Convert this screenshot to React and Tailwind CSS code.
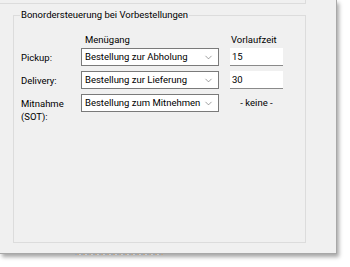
import { ChevronDown } from 'lucide-react';

const rows = [
    { label: ['Pickup:'], value: 'Bestellung zur Abholung', time: '15' },
    { label: ['Delivery:'], value: 'Bestellung zur Lieferung', time: '30' },
    { label: ['Mitnahme', '(SOT):'], value: 'Bestellung zum Mitnehmen', time: null },
];

const Combo = ({ value }) => (
    <div className="flex items-center justify-between h-[18px] w-[138px] bg-white border border-[#7a7a7a] pl-[3px] pr-[4px]">
        <span className="whitespace-nowrap leading-none">{value}</span>
        <ChevronDown className="text-[#606060] shrink-0" size={11} strokeWidth={1.3} />
    </div>
);

const App = () => {
    return (
        <div className="min-h-screen bg-white text-black text-[9.5px]" style={{ fontFamily: 'Roboto, "Noto Sans", sans-serif' }}>
            <div className="w-[337px] h-[254px] bg-[#f0f0f0] border-r border-b border-[#a8a8a8] shadow-[2px_3px_4px_rgba(0,0,0,0.35)]">
                {/* end of the box above */}
                <div className="h-[4px] w-[306px] border-b border-r border-[#dcdcdc]" />

                <div className="relative ml-[13px] mt-[11px] w-[293px] h-[228px] border border-[#dcdcdc]">
                    <span className="absolute left-[6px] -top-[8px] px-[1px] bg-[#f0f0f0] leading-[14px]">
                        Bonordersteuerung bei Vorbestellungen
                    </span>

                    <div className="pl-[7px] pt-[17px]">
                        <div className="flex h-[15px] items-center">
                            <span className="w-[64px]" />
                            <span className="w-[146px]">Menügang</span>
                            <span>Vorlaufzeit</span>
                        </div>

                        <div className="flex flex-col gap-[5px]">
                            {rows.map((row) => (
                                <div key={row.value} className="flex items-start">
                                    <div className="w-[60px] leading-[13px] pt-[3px]">
                                        {row.label.map((l) => (
                                            <div key={l}>{l}</div>
                                        ))}
                                    </div>
                                    <Combo value={row.value} />
                                    <div className="ml-[11px] w-[53px]">
                                        {row.time ? (
                                            <div className="h-[18px] bg-white border-b border-[#8a8a8a] pl-[2px] flex items-center leading-none">
                                                {row.time}
                                            </div>
                                        ) : (
                                            <div className="h-[18px] flex items-center justify-center">- keine -</div>
                                        )}
                                    </div>
                                </div>
                            ))}
                        </div>
                    </div>
                </div>
            </div>
            <div className="ml-[75px] w-[88px] h-[1px] bg-[repeating-linear-gradient(90deg,#8aa0c0_0px,#8aa0c0_2px,#c8a070_2px,#c8a070_4px,#d8d8d8_4px,#d8d8d8_6px)] opacity-60" />
        </div>
    );
};

export default App;
